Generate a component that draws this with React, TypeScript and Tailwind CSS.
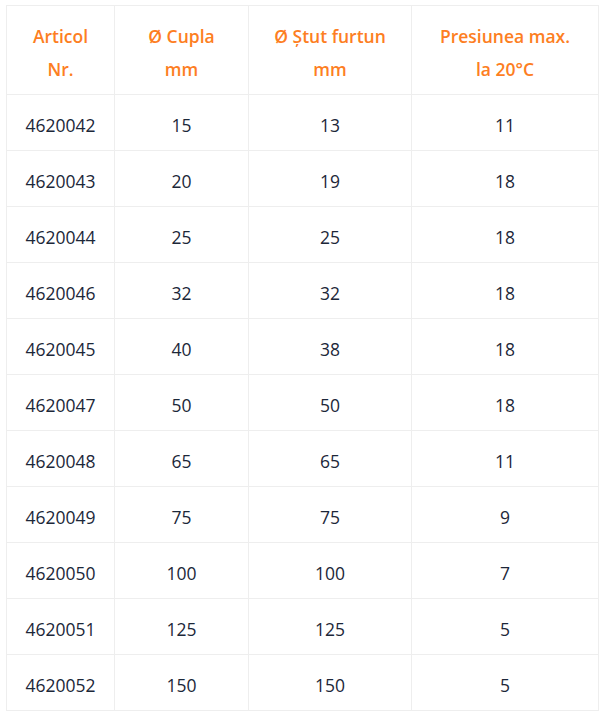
const headers = [
  ['Articol', 'Nr.'],
  ['Ø Cupla', 'mm'],
  ['Ø Ștut furtun', 'mm'],
  ['Presiunea max.', 'la 20°C'],
];

const rows = [
  ['4620042', '15', '13', '11'],
  ['4620043', '20', '19', '18'],
  ['4620044', '25', '25', '18'],
  ['4620046', '32', '32', '18'],
  ['4620045', '40', '38', '18'],
  ['4620047', '50', '50', '18'],
  ['4620048', '65', '65', '11'],
  ['4620049', '75', '75', '9'],
  ['4620050', '100', '100', '7'],
  ['4620051', '125', '125', '5'],
  ['4620052', '150', '150', '5'],
];

export default function App() {
  return (
    <div className="bg-white w-[606px] h-[718px] pt-[5px] pl-[6px] font-['Open_Sans',sans-serif]">
      <table className="table-fixed border-collapse w-[592px]">
        <colgroup>
          <col className="w-[108px]" />
          <col className="w-[134px]" />
          <col className="w-[163px]" />
          <col className="w-[187px]" />
        </colgroup>
        <thead>
          <tr className="h-[89px]">
            {headers.map(([a, b], i) => (
              <th
                key={i}
                className="border border-[#eeeeee] text-center align-middle pt-[5px] px-1 text-[17.5px] leading-[33px] font-semibold text-[#fd7e22]"
              >
                {a}
                <br />
                {b}
              </th>
            ))}
          </tr>
        </thead>
        <tbody>
          {rows.map((r, i) => (
            <tr key={i} className="h-[56px]">
              {r.map((c, j) => (
                <td
                  key={j}
                  className="border border-[#eeeeee] text-center align-middle pt-[4px] text-[17.5px] leading-[24px] text-[#1c2739]"
                >
                  {c}
                </td>
              ))}
            </tr>
          ))}
        </tbody>
      </table>
    </div>
  );
}
